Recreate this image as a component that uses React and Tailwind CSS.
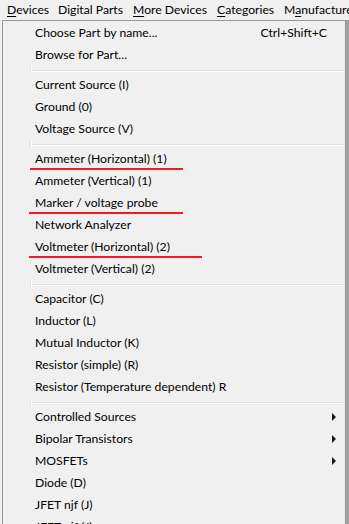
import React from "react";

const SEP = { sep: true };
const items = [
  { t: "Choose Part by name...", k: "Ctrl+Shift+C" },
  { t: "Browse for Part..." },
  SEP,
  { t: "Current Source (I)" },
  { t: "Ground (0)" },
  { t: "Voltage Source (V)" },
  SEP,
  { t: "Ammeter (Horizontal) (1)", red: "a" },
  { t: "Ammeter (Vertical) (1)" },
  { t: "Marker / voltage probe", red: "b" },
  { t: "Network Analyzer" },
  { t: "Voltmeter (Horizontal) (2)", red: "c" },
  { t: "Voltmeter (Vertical) (2)" },
  SEP,
  { t: "Capacitor (C)" },
  { t: "Inductor (L)" },
  { t: "Mutual Inductor (K)" },
  { t: "Resistor (simple) (R)" },
  { t: "Resistor (Temperature dependent) R" },
  SEP,
  { t: "Controlled Sources", sub: true },
  { t: "Bipolar Transistors", sub: true },
  { t: "MOSFETs", sub: true },
  { t: "Diode (D)" },
  { t: "JFET njf (J)" },
  { t: "JFET pjf (J)" },
];

function Gutter() {
  return (
    <>
      <div className="w-[27px] shrink-0" />
      <div className="w-[1px] shrink-0 bg-[#e2e3e3]" />
      <div className="w-[1px] shrink-0 bg-white" />
    </>
  );
}

function RedLine({ kind }) {
  if (kind === "a")
    return <div className="absolute left-[27px] top-[20px] h-[2px] w-[153px] bg-[#ed1c24]" />;
  if (kind === "b")
    return <div className="absolute left-[26px] top-[20px] h-[2px] w-[154px] bg-[#ed1c24]" />;
  return <div className="absolute left-[26px] top-[20px] h-[2px] w-[173px] bg-[#ed1c24]" />;
}

export default function App() {
  return (
    <div className="w-[349px] h-[524px] overflow-hidden bg-[#f0f0f0] text-black text-[12.2px] leading-none font-['Lato',sans-serif] select-none">
      <div className="flex h-[20px] items-center pl-[7px] whitespace-nowrap">
        <span className="w-[51px] shrink-0"><span className="underline underline-offset-[2px]">D</span>evices</span>
        <span className="w-[75px] shrink-0">Digital Parts</span>
        <span className="w-[84px] shrink-0"><span className="underline underline-offset-[2px]">M</span>ore Devices</span>
        <span className="w-[67px] shrink-0"><span className="underline underline-offset-[2px]">C</span>ategories</span>
        <span className="shrink-0">M<span className="underline underline-offset-[2px]">a</span>nufacture</span>
      </div>
      <div className="flex h-[504px]">
        <div className="w-[2px] shrink-0" />
        <div className="w-[344px] shrink-0 border-l border-t border-r border-[#979797] pt-[1px] bg-[#f0f0f0]">
          {items.map((it, i) =>
            it.sep ? (
              <div key={i} className="flex h-[8px]">
                <Gutter />
                <div className="flex-1 flex flex-col pt-[4px] pr-[1px]">
                  <div className="h-[1px] bg-[#e0e0e0]" />
                  <div className="h-[1px] bg-white" />
                </div>
              </div>
            ) : (
              <div key={i} className="relative flex h-[22px] items-center">
                <Gutter />
                <div className="flex-1 flex items-center pl-[3px] whitespace-nowrap">
                  <span className="flex-1">{it.t}</span>
                  {it.k && <span className="pr-[18px]">{it.k}</span>}
                  {it.sub && (
                    <span className="mr-[9px] w-0 h-0 border-y-[4px] border-y-transparent border-l-[4px] border-l-[#1a1a1a]" />
                  )}
                </div>
                {it.red && <RedLine kind={it.red} />}
              </div>
            )
          )}
        </div>
        <div className="w-[3px] shrink-0 bg-[#a0a0a0]" />
      </div>
    </div>
  );
}
